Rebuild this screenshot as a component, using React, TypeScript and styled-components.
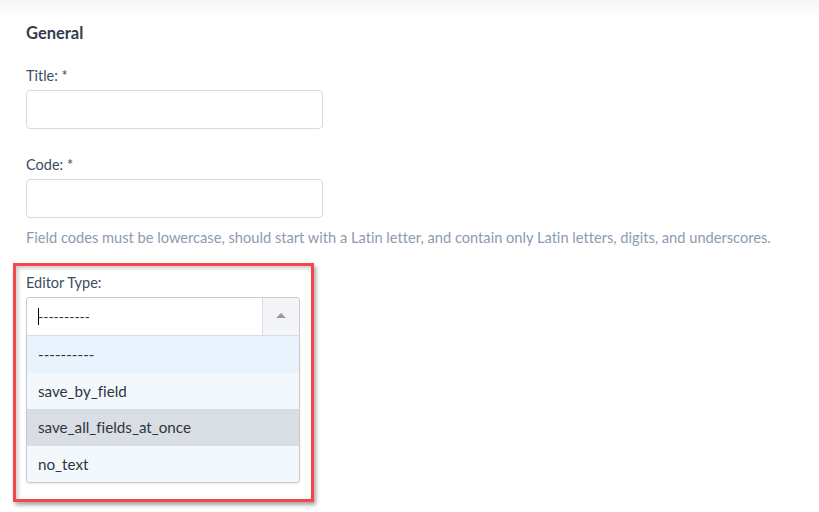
import React from "react";
import styled, { createGlobalStyle } from "styled-components";

const Global = createGlobalStyle`
  html, body { margin: 0; padding: 0; background: #ffffff; }
  body { font-family: Lato, "Noto Sans", sans-serif; font-variant-ligatures: none; }
`;

const Page = styled.div`
  width: 819px;
  height: 512px;
  overflow: hidden;
  background: #ffffff;
`;

const TopShade = styled.div`
  height: 20px;
  background: linear-gradient(#f7f7f7, #ffffff);
`;

const Content = styled.div`
  padding: 3px 26px 0 26px;
`;

const SectionTitle = styled.h2`
  margin: 0 0 23px 0;
  font-size: 16.5px;
  line-height: 20px;
  font-weight: 700;
  color: #333c4e;
`;

const Field = styled.div<{ $gap?: number }>`
  display: flex;
  flex-direction: column;
  margin-bottom: ${(p) => p.$gap ?? 0}px;
`;

const Label = styled.label<{ $space?: number }>`
  font-size: 14.5px;
  line-height: 20px;
  color: #3c4d63;
  margin-bottom: ${(p) => p.$space ?? 4}px;
`;

const TextInput = styled.input`
  box-sizing: border-box;
  width: 297px;
  height: 39px;
  border: 1px solid #d7dae7;
  border-radius: 4px;
  background: #fff;
  outline: none;
`;

const Help = styled.div`
  margin-top: 10px;
  font-size: 14.65px;
  line-height: 20px;
  color: #8c9bb0;
  white-space: nowrap;
`;

const Highlight = styled.div`
  box-sizing: border-box;
  width: 301px;
  margin: 15px 0 0 -13px;
  padding: 7px 11px 16px 10px;
  border: 3px solid #f4474a;
  box-shadow: 2px 3px 4px rgba(0, 0, 0, 0.35), inset 2px 2px 4px rgba(0, 0, 0, 0.22);
`;

const Select = styled.div`
  box-sizing: border-box;
  height: 39px;
  display: flex;
  border: 1px solid #c9c9cc;
  border-bottom-color: #dcdde0;
  border-radius: 4px 4px 0 0;
  overflow: hidden;
`;

const SelectValue = styled.div`
  flex: 1;
  display: flex;
  align-items: center;
  padding-left: 11px;
  font-size: 14px;
  color: #333;
  background: #fff;
`;

const Caret = styled.span`
  display: inline-block;
  width: 1px;
  height: 17px;
  background: #000;
  margin-right: -1px;
`;

const ArrowBox = styled.div`
  width: 36px;
  border-left: 1px solid #dcdde0;
  background: #f4f5f8;
  display: flex;
  align-items: center;
  justify-content: center;
`;

const Arrow = styled.div`
  width: 0;
  height: 0;
  border-left: 5px solid transparent;
  border-right: 5px solid transparent;
  border-bottom: 5px solid #9a9a9a;
  margin-top: -2px;
`;

const Menu = styled.ul`
  margin: 0;
  padding: 0;
  list-style: none;
  border: 1px solid #c9c9cc;
  border-top: none;
  border-radius: 0 0 4px 4px;
  overflow: hidden;
  box-shadow: 0 1px 2px rgba(0, 0, 0, 0.08);
`;

const Option = styled.li<{ $bg: string }>`
  height: 36.5px;
  display: flex;
  align-items: center;
  padding-left: 11px;
  font-size: 15.2px;
  color: #30353d;
  background: ${(p) => p.$bg};
`;

const options = [
  { label: "----------", bg: "#e9f3fd" },
  { label: "save_by_field", bg: "#f3f8fd" },
  { label: "save_all_fields_at_once", bg: "#d9dde4" },
  { label: "no_text", bg: "#f3f8fd" },
];

export default function App() {
  return (
    <Page>
      <Global />
      <TopShade />
      <Content>
        <SectionTitle>General</SectionTitle>
        <Field $gap={26}>
          <Label>Title: *</Label>
          <TextInput />
        </Field>
        <Field>
          <Label>Code: *</Label>
          <TextInput />
        </Field>
        <Help>
          Field codes must be lowercase, should start with a Latin letter, and contain only Latin letters, digits, and underscores.
        </Help>
        <Highlight>
          <Field>
            <Label>Editor Type:</Label>
            <Select>
              <SelectValue>
                <Caret />
                ----------
              </SelectValue>
              <ArrowBox>
                <Arrow />
              </ArrowBox>
            </Select>
            <Menu>
              {options.map((o) => (
                <Option key={o.label} $bg={o.bg}>
                  {o.label}
                </Option>
              ))}
            </Menu>
          </Field>
        </Highlight>
      </Content>
    </Page>
  );
}
